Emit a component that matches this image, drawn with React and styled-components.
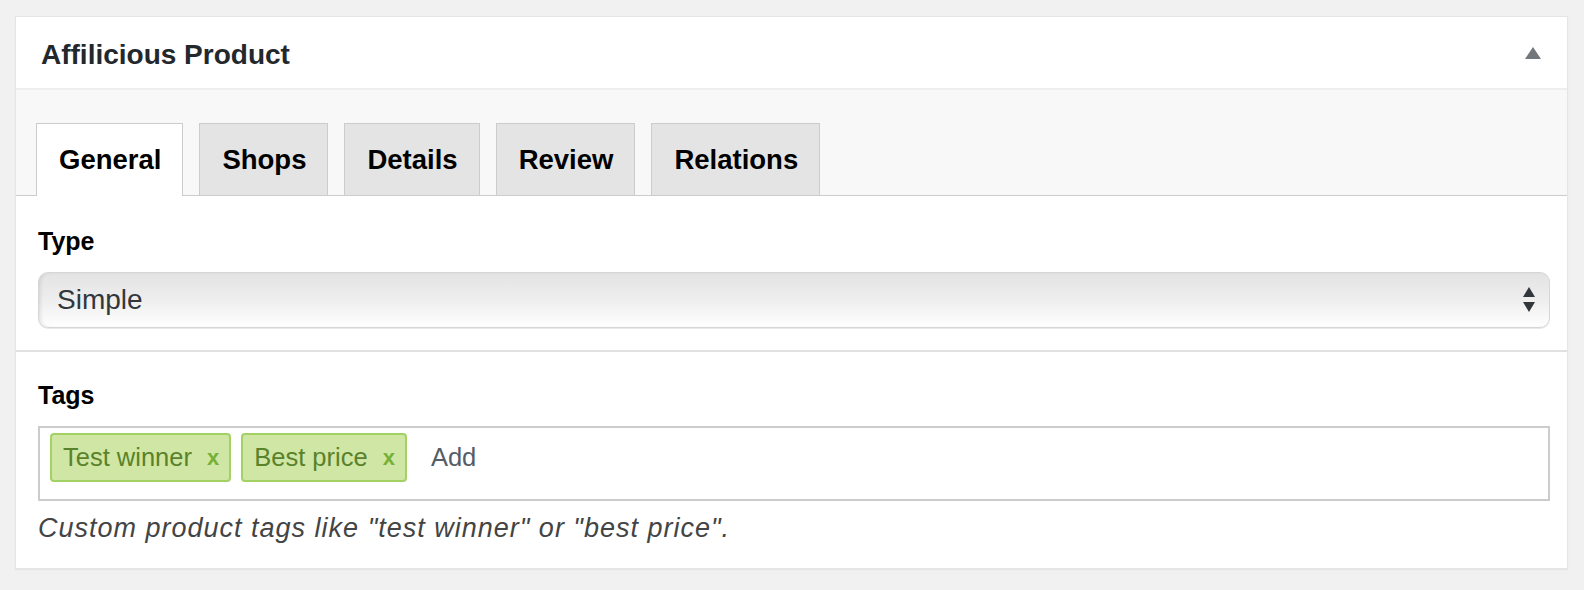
import styled, { createGlobalStyle } from 'styled-components';

const GlobalStyle = createGlobalStyle`
    body {
        margin: 0;
        background: #f1f1f1;
        font-family: "Liberation Sans", Arial, sans-serif;
    }
`

const tabs = ['General', 'Shops', 'Details', 'Review', 'Relations'];
const tags = ['Test winner', 'Best price'];

export default function App() {
    return (
        <Page>
            <GlobalStyle />
            <Postbox>
                <Header>
                    <Title>Affilicious Product</Title>
                    <Toggle viewBox="0 0 16 12">
                        <path d="M8 0 L16 12 L0 12 Z" fill="#72777c" />
                    </Toggle>
                </Header>
                <TabBar>
                    {tabs.map((tab, i) => <Tab key={tab} active={i === 0}>{tab}</Tab>)}
                </TabBar>
                <Field>
                    <Label>Type</Label>
                    <SelectBox>
                        <span>Simple</span>
                        <svg width="12" height="26" viewBox="0 0 12 26">
                            <path d="M6 0 L12 10 L0 10 Z" fill="#32373c" />
                            <path d="M0 15 L12 15 L6 25 Z" fill="#32373c" />
                        </svg>
                    </SelectBox>
                </Field>
                <Field last>
                    <Label>Tags</Label>
                    <TagBox>
                        {tags.map(tag => (
                            <Chip key={tag}>
                                {tag}
                                <Remove>x</Remove>
                            </Chip>
                        ))}
                        <AddInput>Add</AddInput>
                    </TagBox>
                    <Help>Custom product tags like "test winner" or "best price".</Help>
                </Field>
            </Postbox>
        </Page>
    )
}

const Page = styled.div`
    padding: 16px 16px 22px 15px;
`

const Postbox = styled.div`
    background: #fff;
    border: 1px solid #e5e5e5;
    box-shadow: 0 1px 1px rgba(0, 0, 0, 0.05);
`

const Header = styled.div`
    height: 67px;
    display: flex;
    align-items: center;
    justify-content: space-between;
    padding: 4px 26px 0 25px;
    border-bottom: 2px solid #eeeeee;
`

const Title = styled.h2`
    margin: 0;
    font-size: 28px;
    font-weight: 700;
    color: #23282d;
`

const Toggle = styled.svg`
    width: 16px;
    height: 12px;
    margin-top: -4px;
`

const TabBar = styled.div`
    display: flex;
    gap: 16px;
    align-items: flex-end;
    padding: 33px 20px 0;
    background: #f8f8f8;
    border-bottom: 1px solid #cccccc;
    height: 72px;
`

const Tab = styled.div`
    box-sizing: border-box;
    display: flex;
    align-items: center;
    padding: 0 21px 0 22px;
    font-size: 27.5px;
    font-weight: 700;
    color: #000;
    border: 1px solid #cccccc;
    border-bottom: none;
    background: ${p => p.active ? '#ffffff' : '#e4e4e4'};
    margin-bottom: ${p => p.active ? '-1px' : '0'};
    height: ${p => p.active ? '73px' : '72px'};
`

const Field = styled.div`
    padding: ${p => p.last ? '28px 17px 24px 22px' : '30px 17px 22px 22px'};
    border-bottom: ${p => p.last ? 'none' : '2px solid #e1e1e1'};
`

const Label = styled.div`
    font-size: 25px;
    font-weight: 700;
    color: #000;
    line-height: 30px;
    margin-bottom: 16px;
`

const SelectBox = styled.div`
    height: 56px;
    box-sizing: border-box;
    display: flex;
    align-items: center;
    justify-content: space-between;
    padding: 0 14px 0 18px;
    border: 1px solid #d6d6d6;
    border-radius: 10px;
    background: linear-gradient(#e3e3e3, #eeeeee 50%, #fbfbfb 90%, #ffffff);
    box-shadow: inset 3px 0 4px -2px rgba(0, 0, 0, 0.12), 0 1px 0 #e8e8e8;
    font-size: 28px;
    color: #32373c;
`

const TagBox = styled.div`
    height: 75px;
    box-sizing: border-box;
    display: flex;
    align-items: flex-start;
    gap: 10px;
    padding: 5px 10px;
    border: 2px solid #cccccc;
`

const Chip = styled.div`
    height: 49px;
    box-sizing: border-box;
    display: flex;
    align-items: center;
    padding: 0 10px 0 11px;
    background: #d0e6a4;
    border: 2px solid #a3d264;
    border-radius: 4px;
    font-size: 25.5px;
    color: #5a822a;
`

const Remove = styled.span`
    margin-left: 15px;
    font-weight: 700;
    font-size: 22px;
    color: #76b037;
`

const AddInput = styled.div`
    height: 49px;
    display: flex;
    align-items: center;
    padding-left: 14px;
    font-size: 25.5px;
    color: #555d66;
`

const Help = styled.p`
    margin: 11px 0 0;
    font-size: 27px;
    letter-spacing: 1px;
    line-height: 32px;
    font-style: italic;
    color: #444;
`
